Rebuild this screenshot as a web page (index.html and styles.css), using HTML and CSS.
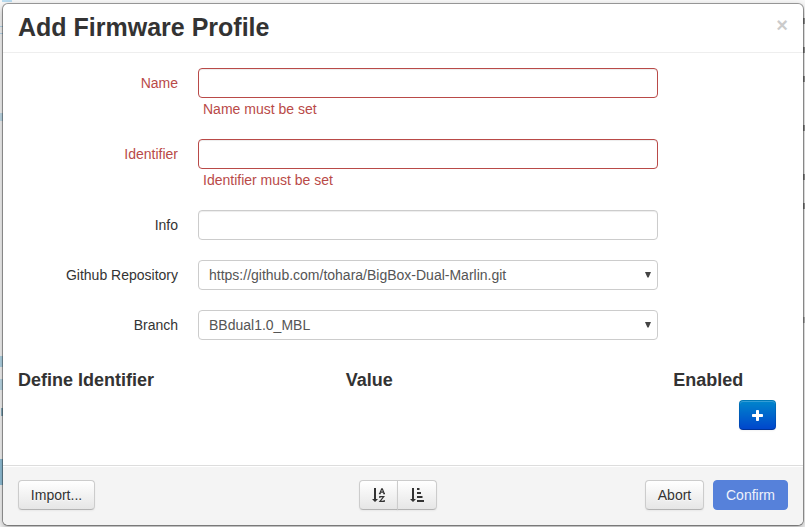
FILE: index.html
```
<!DOCTYPE html>
<html lang="en">
<head>
<meta charset="utf-8">
<title>Add Firmware Profile</title>
<link rel="stylesheet" href="styles.css">
</head>
<body>
<div class="backdrop"></div>
<div class="modal">
  <header class="modal-header">
    <h3>Add Firmware Profile</h3>
    <span class="close">×</span>
  </header>
  <main class="modal-body">
    <div class="row error">
      <label for="name">Name</label>
      <div class="controls"><input id="name" type="text"><span class="help">Name must be set</span></div>
    </div>
    <div class="row error">
      <label for="ident">Identifier</label>
      <div class="controls"><input id="ident" type="text"><span class="help">Identifier must be set</span></div>
    </div>
    <div class="row">
      <label for="info">Info</label>
      <div class="controls"><input id="info" type="text"></div>
    </div>
    <div class="row">
      <span class="label">Github Repository</span>
      <div class="controls"><div class="select"><span>https://github.com/tohara/BigBox-Dual-Marlin.git</span><svg class="arrow" viewBox="0 0 6 6"><path d="M0 0h6L3.6 5.5H2.4z"/></svg></div></div>
    </div>
    <div class="row">
      <span class="label">Branch</span>
      <div class="controls"><div class="select"><span>BBdual1.0_MBL</span><svg class="arrow" viewBox="0 0 6 6"><path d="M0 0h6L3.6 5.5H2.4z"/></svg></div></div>
    </div>
    <div class="columns">
      <h4>Define Identifier</h4><h4>Value</h4><h4>Enabled</h4>
    </div>
    <div class="add"><button class="btn primary"><svg width="11" height="11" viewBox="0 0 11 11"><path fill="#fff" d="M4.8 0h1.4q.8 0 .8.8V4h3.2q.8 0 .8.8v1.4q0 .8-.8.8H7v3.200q0 .8-.8.8H4.800q-.8 0-.8-.8V7H.8Q0 7 0 6.200V4.800Q0 4 .8 4H4V.8Q4 0 4.800 0z"/></svg></button></div>
  </main>
  <footer class="modal-footer">
    <button class="btn import">Import...</button>
    <div class="group">
      <button class="btn"><svg width="13" height="14" viewBox="0 0 13 14"><path fill="#333" d="M2 0h2v11h2L3 14 0 11h2z"/><path fill="none" stroke="#333" stroke-width="1.200" d="M7.800 5.500L9.700.8h.6l1.900 4.700M8.500 4.100h3M6.900 5.600h1.900M11.200 5.600h1.800M7.800 9.900V8.600h4L7.900 13.300h4.300V12"/></svg></button>
      <button class="btn"><svg width="14" height="14" viewBox="0 0 14 14"><path fill="#333" d="M2 0h2v11h2L3 14 0 11h2zM7 0h2.500v2H7zM7 4h4v2H7zM7 8h5.500v2H7zM7 12h7v2H7z"/></svg></button>
    </div>
    <div class="actions"><button class="btn">Abort</button><button class="btn confirm">Confirm</button></div>
  </footer>
</div>
</body>
</html>
```
FILE: styles.css
```
* { box-sizing: border-box; }
body {
  margin: 0;
  padding: 3px 1px 1px 2px;
  height: 527px;
  overflow: hidden;
  background: #f5f5f5;
  color: #333;
  font: 14px/20px "Liberation Sans", Arial, sans-serif;
}
h3, h4 { margin: 0; font-weight: bold; }
.backdrop {
  position: absolute;
  inset: 0;
  background:
    linear-gradient(#b9dcf0, #b9dcf0) 2px 0 / 10px 2px no-repeat,
    linear-gradient(#b9dcf0, #b9dcf0) 0 26px / 3px 1px no-repeat,
    linear-gradient(#b9dcf0, #b9dcf0) 0 33px / 3px 1px no-repeat,
    linear-gradient(#c5dfed, #c5dfed) 0 113px / 3px 8px no-repeat,
    linear-gradient(#b5d8e9, #b5d8e9) 0 356px / 3px 11px no-repeat,
    linear-gradient(#c0deec, #c0deec) 0 379px / 3px 11px no-repeat,
    linear-gradient(#8fb5c6, #8fb5c6) 1px 408px / 2px 8px no-repeat,
    linear-gradient(#94c3dc, #94c3dc) 0 459px / 3px 26px no-repeat,
    linear-gradient(#999, #999) 100% 18px / 2px 6px no-repeat,
    linear-gradient(#999, #999) 100% 47px / 2px 6px no-repeat,
    linear-gradient(#999, #999) 100% 76px / 2px 6px no-repeat,
    linear-gradient(#999, #999) 100% 125px / 2px 6px no-repeat,
    linear-gradient(#999, #999) 100% 174px / 2px 6px no-repeat,
    linear-gradient(#999, #999) 100% 203px / 2px 6px no-repeat,
    linear-gradient(#bbb, #bbb) 100% 317px / 2px 6px no-repeat,
    #f8f8f8;
}
.modal {
  position: relative;
  display: flex;
  flex-direction: column;
  height: 523px;
  background: #fff;
  background-clip: padding-box;
  border: 1px solid rgba(0, 0, 0, .35);
  border-radius: 6px;
  box-shadow: 0 3px 7px rgba(0, 0, 0, .3);
}
.modal-header {
  display: flex;
  justify-content: space-between;
  height: 49px;
  padding: 3px 15px 0;
  border-bottom: 1px solid #eee;
}
.modal-header h3 { font-size: 25px; line-height: 40px; }
.close {
  font-size: 20px;
  font-weight: bold;
  line-height: 20px;
  margin-top: 8px;
  color: #000;
  opacity: .2;
}
.modal-body { flex: 1; padding: 15px; }
.row { display: flex; margin-bottom: 20px; }
.row label, .row .label { width: 160px; margin-right: 20px; padding-top: 5px; text-align: right; }
.controls { width: 460px; }
.row input, .select {
  display: block;
  width: 100%;
  height: 30px;
  border: 1px solid #ccc;
  border-radius: 4px;
  background: #fff;
  color: #555;
}
.row input { padding: 4px 6px; box-shadow: inset 0 1px 1px rgba(0, 0, 0, .075); }
.select {
  display: flex;
  justify-content: space-between;
  padding: 4px 6px 4px 10px;
}
.arrow { width: 6px; height: 6px; margin-top: 7px; fill: #444; }
.error { color: #b94a48; }
.error input { border-color: #b94a48; }
.help { display: block; height: 21px; padding: 1px 0 0 5px; }
.columns { display: grid; grid-template-columns: 327.8px 327.4px 1fr; }
.columns h4 { font-size: 18px; line-height: 40px; }
.add { display: flex; justify-content: flex-end; padding-right: 12px; }
.btn {
  display: flex;
  align-items: center;
  justify-content: center;
  height: 30px;
  padding: 0 12px;
  border: 1px solid #ccc;
  border-bottom-color: #b3b3b3;
  border-radius: 4px;
  background: linear-gradient(#fff, #e6e6e6);
  box-shadow: inset 0 1px 0 rgba(255, 255, 255, .2), 0 1px 2px rgba(0, 0, 0, .05);
  color: #333;
  font: inherit;
  text-shadow: 0 1px 1px rgba(255, 255, 255, .75);
}
.btn.primary {
  width: 37px;
  background: linear-gradient(#0088cc, #0044cc) border-box;
  border-color: rgba(0, 0, 0, .1) rgba(0, 0, 0, .1) rgba(0, 0, 0, .25);
}
.modal-footer {
  display: flex;
  justify-content: space-between;
  height: 60px;
  padding: 14px 15px 0;
  border-top: 1px solid #ddd;
  border-radius: 0 0 6px 6px;
  background: #f4f4f4;
  box-shadow: inset 0 1px 0 #fff;
}
.import { width: 77px; }
.group { display: flex; margin-left: 56px; }
.group .btn { width: 39px; flex: none; }
.group .btn:first-child { border-radius: 4px 0 0 4px; }
.group .btn:last-child { width: 40px; margin-left: -1px; border-radius: 0 4px 4px 0; }
.actions { display: flex; gap: 9px; }
.actions .btn { width: 59px; }
.actions .confirm {
  width: 75px;
  background: #5681da;
  border-color: #5681da;
  box-shadow: none;
  color: #eef2fb;
  text-shadow: none;
}
```
